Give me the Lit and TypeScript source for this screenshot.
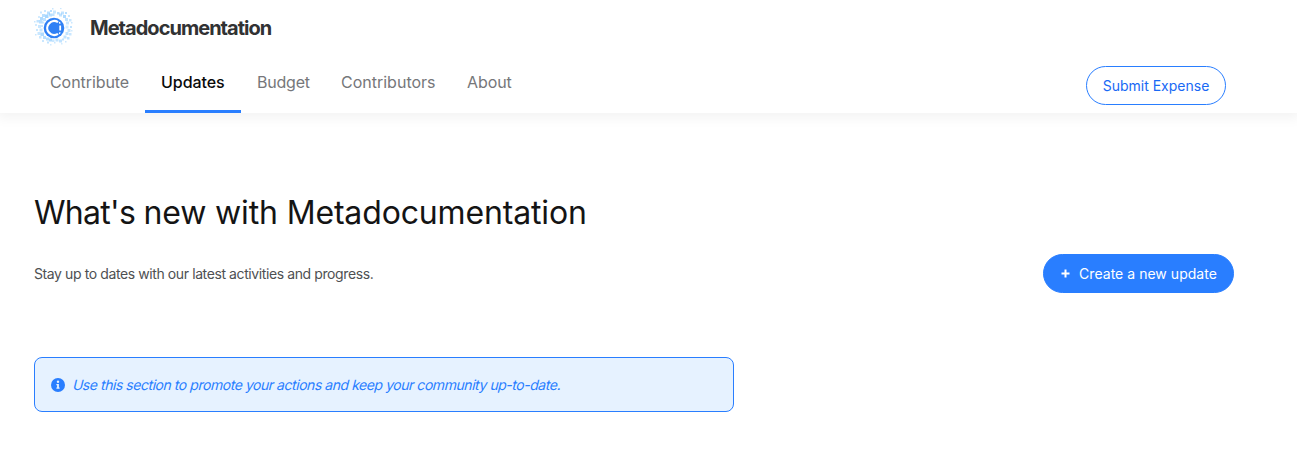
import { LitElement, html, css, svg } from "lit";
import { customElement } from "lit/decorators.js";

// Specks scattered around the ring of the logo: x, y, size, opacity.
const specks: number[][] = [
  [18, 1, 1.5, .3], [26, 0.6, 1.5, .3], [10, 3, 2, .3], [13, 4.5, 3, .4], [16, 3, 2, .4], [19, 3.5, 3, .3], [23, 5, 2.5, .4], [27, 4.5, 3, .35], [31, 5, 2, .4],
  [6, 4.5, 2, .3], [8, 7, 3, .4], [11, 7.5, 3.5, .5], [15, 6.5, 3, .4], [18, 6.5, 2.5, .35], [25, 6.5, 3, .35], [29, 8, 3, .45], [34, 8, 2, .3], [4, 9, 2, .25],
  [6, 10, 3, .45], [9, 11, 3, .35], [31, 11, 3, .35], [35, 12, 2.5, .3], [2.5, 13, 2.5, .35], [5, 13, 3.5, .4], [0, 14, 1.5, .3], [8.3, 14.5, 2, .3], [32, 14.5, 3, .3], [37, 15, 1.5, .3],
  [1, 17, 2, .25], [4, 18, 3, .3], [7, 18, 2, .3], [31.5, 18.5, 3, .25], [36, 19, 2, .35], [33.5, 22, 3, .3], [2, 22, 2, .3], [5.5, 21.5, 3, .3], [37, 23, 1.5, .25],
  [3.5, 25, 3, .3], [6.5, 25.5, 3.5, .45], [1, 27, 1.5, .3], [31.5, 25, 3, .35], [35, 26, 2.5, .3], [9, 29, 3, .4], [5, 29, 2.5, .3], [12, 30.5, 3, .4], [29.5, 28.5, 3, .35], [33, 30, 2.5, .35],
  [15, 31.5, 3, .45], [18, 32.5, 2.5, .3], [21.5, 31.5, 3, .35], [25, 32.5, 3, .35], [28, 31.5, 2, .35], [8, 33, 2, .3], [13, 34.5, 2, .35], [20, 35, 1.5, .3], [31, 34, 1.5, .3], [16, 37, 1.5, .25], [27, 36, 1.5, .25],
];

@customElement("app-root")
export class AppRoot extends LitElement {
  static styles = css`
    :host { display: block; height: 476px; overflow: hidden; background: #fff; font-family: Inter, "Liberation Sans", sans-serif; font-weight: 400; color: #141414; }
    * { box-sizing: border-box; }
    header { height: 113px; display: flex; flex-direction: column; box-shadow: 0 2px 12px 3px rgba(20, 20, 20, 0.05); }
    .brand { height: 56px; display: flex; align-items: center; gap: 16px; padding-left: 34px; }
    .logo { width: 40px; height: 40px; display: block; }
    .name { font-size: 20px; font-weight: 700; letter-spacing: -0.97px; color: #313233; }
    .bar { flex: 1; display: flex; justify-content: space-between; padding: 0 71px 0 34px; }
    nav { display: flex; }
    .tab { width: 111px; height: 57px; padding: 14px 0 0 16px; font-size: 16px; line-height: 24px; color: #76777a; letter-spacing: -0.07px; border-bottom: 3px solid transparent; white-space: nowrap; }
    .active { width: 96px; color: #090a0a; font-weight: 500; letter-spacing: -0.05px; border-color: #297eff; }
    .budget { width: 84px; letter-spacing: -0.22px; }
    .people { width: 126px; letter-spacing: 0; }
    .btn { font-family: inherit; font-weight: inherit; font-size: 14px; height: 39px; border-radius: 20px; border: 1px solid #297eff; display: flex; align-items: center; justify-content: center; padding: 0; white-space: nowrap; }
    .expense { width: 140px; margin-top: 10px; background: #fff; color: #1869f5; }
    .create { width: 191px; background: #297eff; color: #fff; gap: 9px; padding-left: 1px; letter-spacing: 0.03px; }
    .plus { width: 9px; height: 9px; }
    main { padding: 80px 63px 0 34px; }
    h1 { margin: 0; font-size: 32px; line-height: 40px; font-weight: 400; letter-spacing: -0.15px; }
    .first { letter-spacing: -0.7px; }
    .row { margin-top: 21px; display: flex; justify-content: space-between; align-items: center; height: 39px; }
    .sub { font-size: 14px; letter-spacing: -0.4px; color: #4e5052; }
    .note { margin-top: 64px; width: 700px; height: 55px; border: 1px solid #297eff; border-radius: 8px; background: #e6f2ff; color: #297eff; display: flex; align-items: center; gap: 7px; padding-left: 16px; font-size: 14px; letter-spacing: -0.45px; }
    .slant { display: inline-block; transform: skewX(-14deg); transform-origin: 0 80%; }
    .info { width: 14px; height: 14px; }
  `;

  render() {
    return html`
      <header>
        <div class="brand">
          <svg class="logo" viewBox="0 1 40 40">
            ${specks.map(([x, y, s, o]) => svg`<rect x=${x} y=${y} width=${s} height=${s} fill="#4db0ff" opacity=${o}/>`)}
            <circle cx="20" cy="21" r="10.3" fill="#2f80f5"/>
            <path d="M24 15.1A7 7 0 1 0 24 26.9" fill="none" stroke="#fff" stroke-width="2.3"/>
            <path d="M26.200 18.500v5" fill="none" stroke="#fff" stroke-width="1.800"/>
            <path d="M25.200 15.200l1 1.500M25.200 26.800l1-1.500" fill="none" stroke="#fff" stroke-width="1.300"/>
          </svg>
          <span class="name">Metadocumentation</span>
        </div>
        <div class="bar">
          <nav>
            <span class="tab">Contribute</span><span class="tab active">Updates</span><span class="tab budget">Budget</span><span class="tab people">Contributors</span><span class="tab">About</span>
          </nav>
          <button class="btn expense">Submit Expense</button>
        </div>
      </header>
      <main>
        <h1><span class="first">What's </span>new with Metadocumentation</h1>
        <div class="row">
          <span class="sub">Stay up to dates with our latest activities and progress.</span>
          <button class="btn create"><svg class="plus" viewBox="0 0 9 9"><path d="M4.5 .5v8M.5 4.5h8" stroke="#fff" stroke-width="2"/></svg>Create a new update</button>
        </div>
        <div class="note">
          <svg class="info" viewBox="0 0 14 14"><circle cx="7" cy="7" r="7" fill="#297eff"/><circle cx="7" cy="3.8" r="1.2" fill="#e6f2ff"/><path d="M5.4 6h2.5v3.6h.7v1.2H5.4V9.6h.7V7.2h-.7z" fill="#e6f2ff"/></svg>
          <span class="slant">Use this section to promote your actions and keep your community up-to-date.</span>
        </div>
      </main>
    `;
  }
}
